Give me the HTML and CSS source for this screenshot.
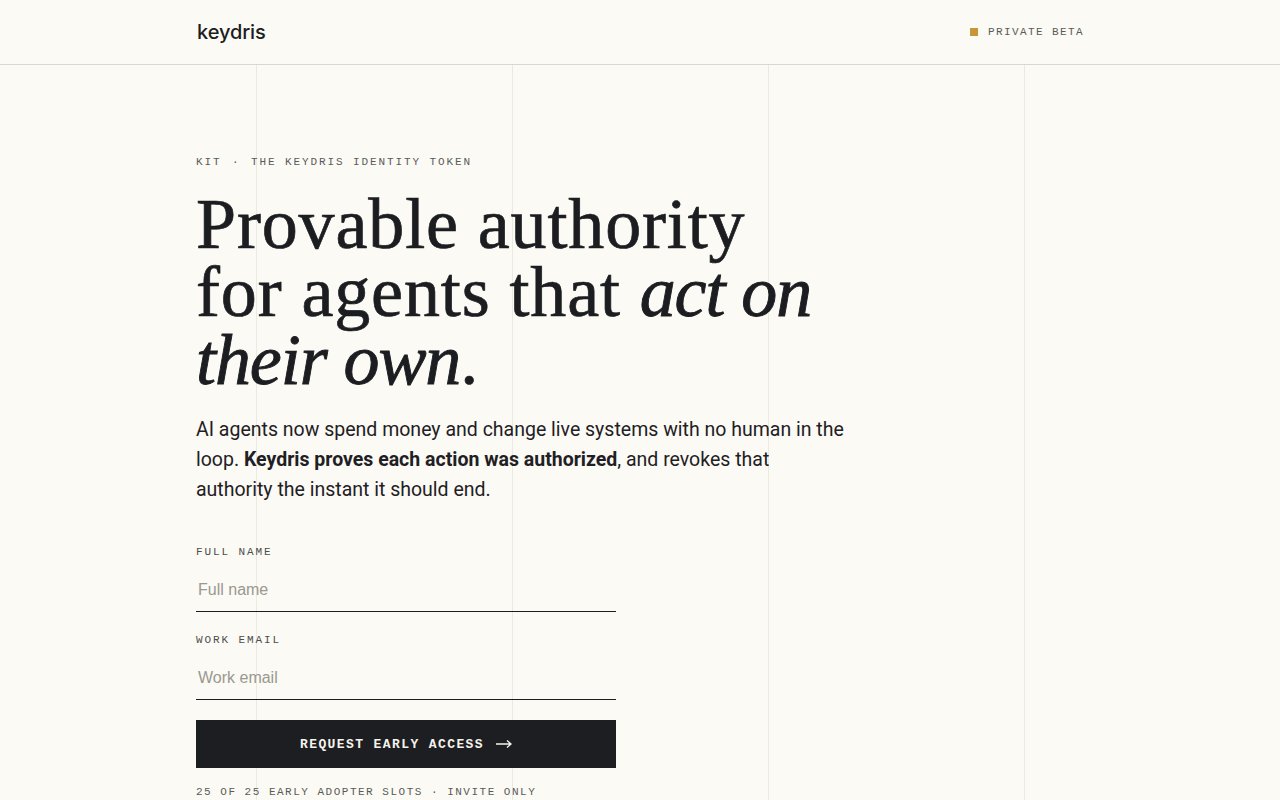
FILE: index.html
```html
<!DOCTYPE html>
<html lang="en">
<head>
<meta charset="utf-8">
<title>keydris — Private beta</title>
<link rel="stylesheet" href="styles.css">
</head>
<body>
<header class="topbar">
  <div class="wrap topbar-inner">
    <a class="logo" href="#">keydris</a>
    <span class="status"><span class="status-dot"></span>PRIVATE BETA</span>
  </div>
</header>
<main class="hero">
  <div class="wrap">
    <p class="eyebrow">KIT <span class="sep">·</span> THE KEYDRIS IDENTITY TOKEN</p>
    <h1 class="headline">Provable authority<br>for agents that <em>act on their own</em>.</h1>
    <p class="lede">AI agents now spend money and change live systems with no human in the loop. <strong>Keydris proves each action was authorized</strong>, and revokes that authority the instant it should end.</p>
    <form class="signup">
      <label class="field">
        <span class="field-label">FULL NAME</span>
        <input class="field-input" type="text" placeholder="Full name">
      </label>
      <label class="field">
        <span class="field-label">WORK EMAIL</span>
        <input class="field-input" type="email" placeholder="Work email">
      </label>
      <button class="cta" type="button">
        <span class="cta-text">REQUEST EARLY ACCESS</span>
        <svg class="cta-arrow" width="16" height="10" viewBox="0 0 16 10" aria-hidden="true">
          <path d="M0 5H15M11 1.5L15 5L11 8.5" fill="none" stroke="currentColor" stroke-width="1.3"/>
        </svg>
      </button>
      <p class="note">25 OF 25 EARLY ADOPTER SLOTS · INVITE ONLY</p>
    </form>
  </div>
</main>
</body>
</html>
```
FILE: styles.css
```css
* { box-sizing: border-box; }

html, body {
  margin: 0;
  padding: 0;
}

body {
  background: #fbfaf5;
  color: #1c1d21;
  font-family: Roboto, Inter, "Noto Sans", sans-serif;
  min-height: 100vh;
}

.wrap {
  width: 888px;
  margin: 0 auto;
}

/* top bar */
.topbar {
  height: 65px;
  border-bottom: 1px solid #d9d7d0;
}

.topbar-inner {
  height: 64px;
  display: flex;
  align-items: center;
  justify-content: space-between;
}

.logo {
  font-family: Inter, "Noto Sans", sans-serif;
  font-size: 20px;
  font-weight: 500;
  color: #1c1d21;
  text-decoration: none;
  letter-spacing: -0.005em;
  padding-left: 1px;
}

.status {
  display: flex;
  align-items: center;
  gap: 10px;
  font-family: "Liberation Mono", "DejaVu Sans Mono", monospace;
  font-size: 11px;
  letter-spacing: 1.4px;
  color: #5a5a58;
}

.status-dot {
  width: 8px;
  height: 8px;
  background: #c9963c;
}

/* hero with column guides every 256px */
.hero {
  min-height: calc(100vh - 65px);
  background-image:
    linear-gradient(#ebe9e2, #ebe9e2),
    linear-gradient(#ebe9e2, #ebe9e2),
    linear-gradient(#ebe9e2, #ebe9e2),
    linear-gradient(#ebe9e2, #ebe9e2);
  background-size: 1px 100%;
  background-repeat: no-repeat;
  background-position: 256px 0, 512px 0, 768px 0, 1024px 0;
  padding-top: 90px;
}

.eyebrow {
  margin: 0;
  font-family: "Liberation Mono", "DejaVu Sans Mono", monospace;
  font-size: 11px;
  letter-spacing: 1.9px;
  color: #5a5a58;
  line-height: 14px;
}

.eyebrow .sep {
  margin: 0 2px;
}

.headline {
  margin: 21px 0 0;
  font-family: "Liberation Serif", "DejaVu Serif", serif;
  font-weight: 400;
  font-size: 72px;
  line-height: 68px;
  letter-spacing: 0.012em;
  -webkit-text-stroke: 0.7px #1c1d21;
  color: #1c1d21;
  max-width: 660px;
}

.headline em {
  font-style: italic;
  letter-spacing: -0.015em;
  -webkit-text-stroke: 0.9px #1c1d21;
}

.lede {
  margin: 21px 0 0;
  font-size: 19.5px;
  line-height: 30px;
  color: #1f2024;
  max-width: 650px;
}

.lede strong {
  font-weight: 700;
}

/* form */
.signup {
  margin-top: 40px;
  width: 420px;
  display: flex;
  flex-direction: column;
}

.field {
  display: flex;
  flex-direction: column;
  margin-bottom: 20px;
}

.field + .field {
  margin-top: 1px;
}

.field-label {
  font-family: "Liberation Mono", "DejaVu Sans Mono", monospace;
  font-size: 11px;
  letter-spacing: 1.9px;
  color: #4d4d4b;
  line-height: 14px;
}

.field-input {
  margin-top: 9px;
  height: 44px;
  border: 0;
  border-bottom: 1px solid #1c1d21;
  border-radius: 0;
  background: transparent;
  padding: 0 2px;
  font-family: "Liberation Sans", Arial, sans-serif;
  font-size: 16px;
  color: #1c1d21;
  outline: none;
}

.field-input::placeholder {
  color: #9a9890;
}

.cta {
  height: 48px;
  border: 0;
  background: #1d1e22;
  color: #f5f3ec;
  font-family: "Liberation Mono", "DejaVu Sans Mono", monospace;
  font-size: 13px;
  font-weight: 700;
  letter-spacing: 1.4px;
  cursor: pointer;
  display: flex;
  align-items: center;
  justify-content: center;
  gap: 12px;
  padding: 0;
}

.cta-arrow {
  display: block;
}

.note {
  margin: 17px 0 0;
  font-family: "Liberation Mono", "DejaVu Sans Mono", monospace;
  font-size: 11px;
  line-height: 14px;
  letter-spacing: 1.5px;
  color: #5a5a58;
  white-space: nowrap;
}
```
